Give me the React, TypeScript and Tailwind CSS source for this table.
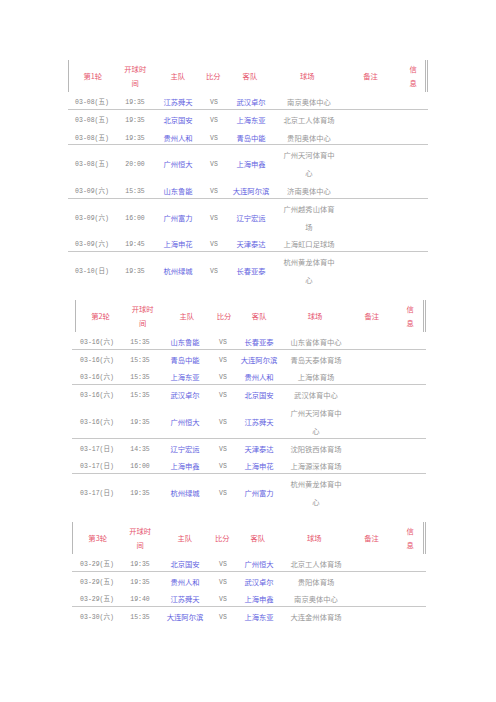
type Match = {
  date: string;
  time: string;
  home: string;
  away: string;
  venue: string;
};

type Round = {
  title: string;
  wrap: string;
  head: string;
  cols: string[];
  matches: Match[];
};

const ROUNDS: Round[] = [
  {
    title: "第1轮",
    wrap: "ml-[68px] w-[360px]",
    head: "",
    cols: ["w-[48px]", "w-[38px] px-[5px]", "w-[48px]", "w-[24px]", "w-[50px]", "w-[66px] px-[5px]", "w-[62px]", "w-[24px] px-[5px]"],
    matches: [
      { date: "03-08(五)", time: "19:35", home: "江苏舜天", away: "武汉卓尔", venue: "南京奥体中心" },
      { date: "03-08(五)", time: "19:35", home: "北京国安", away: "上海东亚", venue: "北京工人体育场" },
      { date: "03-08(五)", time: "19:35", home: "贵州人和", away: "青岛中能", venue: "贵阳奥体中心" },
      { date: "03-08(五)", time: "20:00", home: "广州恒大", away: "上海申鑫", venue: "广州天河体育中心" },
      { date: "03-09(六)", time: "15:35", home: "山东鲁能", away: "大连阿尔滨", venue: "济南奥体中心" },
      { date: "03-09(六)", time: "16:00", home: "广州富力", away: "辽宁宏运", venue: "广州越秀山体育场" },
      { date: "03-09(六)", time: "19:45", home: "上海申花", away: "天津泰达", venue: "上海虹口足球场" },
      { date: "03-10(日)", time: "19:35", home: "杭州绿城", away: "长春亚泰", venue: "杭州黄龙体育中心" },
    ],
  },
  {
    title: "第2轮",
    wrap: "ml-[72px] w-[354px]",
    head: "ml-[3px]",
    cols: ["w-[50px]", "w-[36px] px-[4px]", "w-[54px]", "w-[22px]", "w-[50px]", "w-[64px] px-[4px]", "w-[52px]", "w-[26px] px-[6px]"],
    matches: [
      { date: "03-16(六)", time: "15:35", home: "山东鲁能", away: "长春亚泰", venue: "山东省体育中心" },
      { date: "03-16(六)", time: "15:35", home: "青岛中能", away: "大连阿尔滨", venue: "青岛天泰体育场" },
      { date: "03-16(六)", time: "15:35", home: "上海东亚", away: "贵州人和", venue: "上海体育场" },
      { date: "03-16(六)", time: "15:35", home: "武汉卓尔", away: "北京国安", venue: "武汉体育中心" },
      { date: "03-16(六)", time: "19:35", home: "广州恒大", away: "江苏舜天", venue: "广州天河体育中心" },
      { date: "03-17(日)", time: "14:35", home: "辽宁宏运", away: "天津泰达", venue: "沈阳铁西体育场" },
      { date: "03-17(日)", time: "16:00", home: "上海申鑫", away: "上海申花", venue: "上海源深体育场" },
      { date: "03-17(日)", time: "19:35", home: "杭州绿城", away: "广州富力", venue: "杭州黄龙体育中心" },
    ],
  },
  {
    title: "第3轮",
    wrap: "ml-[72px] w-[354px]",
    head: "",
    cols: ["w-[50px]", "w-[36px] px-[4px]", "w-[54px]", "w-[22px]", "w-[50px]", "w-[64px] px-[4px]", "w-[52px]", "w-[26px] px-[6px]"],
    matches: [
      { date: "03-29(五)", time: "19:35", home: "北京国安", away: "广州恒大", venue: "北京工人体育场" },
      { date: "03-29(五)", time: "19:35", home: "贵州人和", away: "武汉卓尔", venue: "贵阳体育场" },
      { date: "03-29(五)", time: "19:40", home: "江苏舜天", away: "上海申鑫", venue: "南京奥体中心" },
      { date: "03-30(六)", time: "15:35", home: "大连阿尔滨", away: "上海东亚", venue: "大连金州体育场" },
    ],
  },
];

const HEAD = ["", "开球时间", "主队", "比分", "客队", "球场", "备注", "信息"];

const cjk = "font-['Noto_Sans_CJK_SC',sans-serif]";
const mono = "font-['Liberation_Mono','Noto_Sans_CJK_SC',monospace] text-[6.5px] text-[#858585]";

function MatchRow({ m, cols, sep }: { m: Match; cols: string[]; sep: boolean }) {
  const two = m.venue.length > 7;
  // separator lines sit a few px above the row's bottom, as in the source doc
  const outer = sep
    ? two
      ? "h-[33.6px] border-b border-[#c8c8c8] mb-[2px]"
      : "h-[15.8px] border-b border-[#c8c8c8] mb-[2px]"
    : two
      ? "h-[35.6px]"
      : "h-[17.8px]";
  return (
    <div className={outer}>
      <div className={`flex items-center leading-[17.8px] ${two ? "h-[35.6px]" : "h-[17.8px]"}`}>
        <div className={`${cols[0]} shrink-0 text-center ${mono}`}>{m.date}</div>
        <div className={`${cols[1]} shrink-0 text-center ${mono}`}>{m.time}</div>
        <div className={`${cols[2]} shrink-0 text-center text-[7.3px] text-[#6262e0] ${cjk}`}>{m.home}</div>
        <div className={`${cols[3]} shrink-0 text-center ${mono}`}>VS</div>
        <div className={`${cols[4]} shrink-0 text-center text-[7.3px] text-[#6262e0] ${cjk}`}>{m.away}</div>
        <div className={`${cols[5]} shrink-0 text-center text-[7.3px] text-[#989898] ${cjk}`}>{m.venue}</div>
        <div className={`${cols[6]} shrink-0`} />
        <div className={`${cols[7]} shrink-0`} />
      </div>
    </div>
  );
}

function RoundTable({ round }: { round: Round }) {
  return (
    <div className={round.wrap}>
      <div className={`flex h-[32px] items-center border-l border-r-[3px] border-double border-[#b8b8b8] ${round.head}`}>
        {HEAD.map((h, i) => (
          <div
            key={i}
            className={`${round.cols[i]} text-center text-[7.3px] leading-[14px] text-[#e6566e] ${cjk}`}
          >
            {i === 0 ? round.title : h}
          </div>
        ))}
      </div>
      <div className="mt-[2px]">
        {round.matches.map((m, i) => (
          <MatchRow key={i} m={m} cols={round.cols} sep={i % 2 === 0} />
        ))}
      </div>
    </div>
  );
}

export default function App() {
  return (
    <div className="h-[702px] w-[496px] bg-white pt-[60px]">
      <div className="flex flex-col gap-[10px]">
        {ROUNDS.map((r) => (
          <RoundTable key={r.title} round={r} />
        ))}
      </div>
    </div>
  );
}
